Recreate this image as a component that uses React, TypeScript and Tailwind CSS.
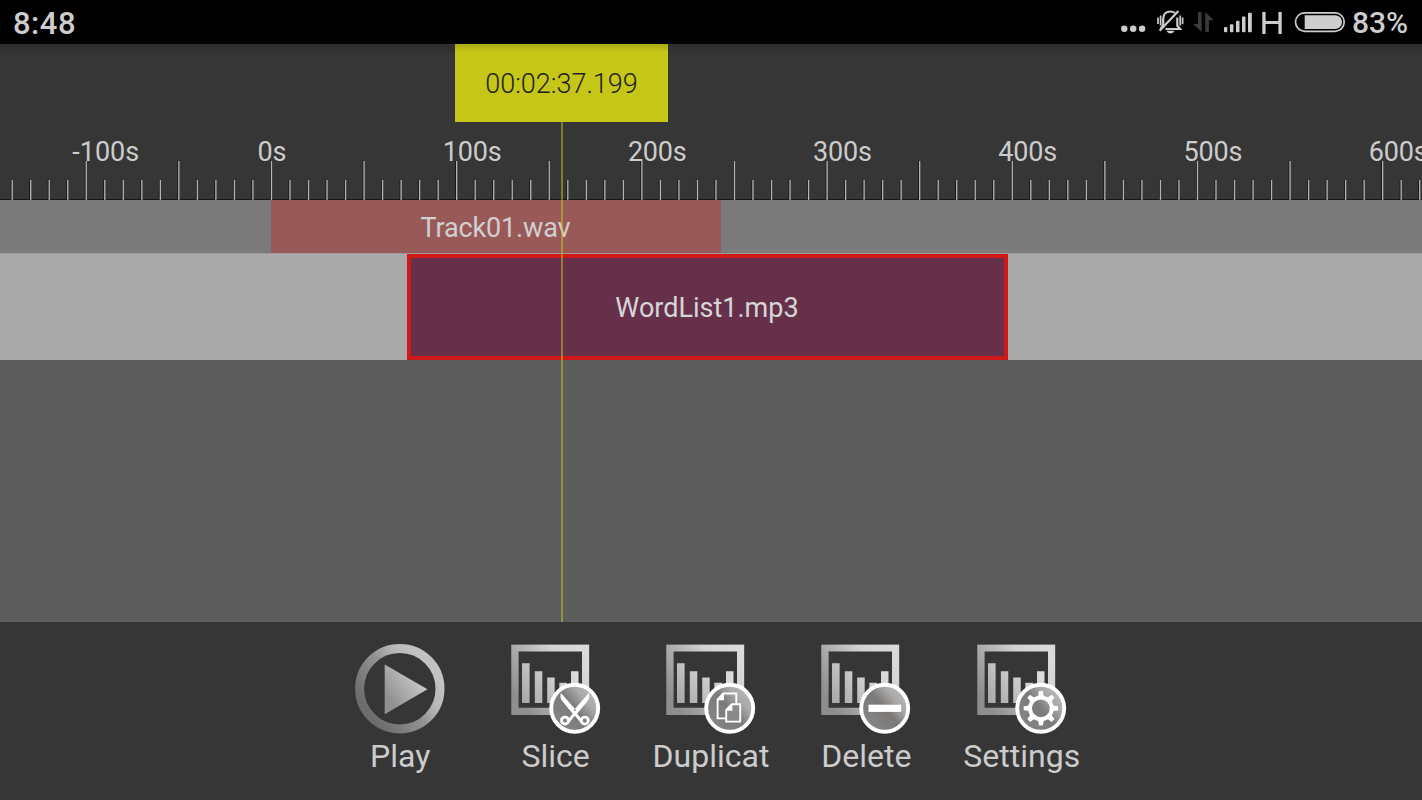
import type { ReactNode } from 'react';

const PX_PER_TICK = 18.52;
const ORIGIN_X = 271.4;

const ticks = Array.from({ length: 77 }, (_, i) => i - 14);

function StatusBar() {
  return (
    <div className="flex h-[44px] items-center justify-between bg-black pl-[13px] pr-[14px] text-[#cdcdcd]">
      <span className="pt-[2px] text-[31px] font-medium leading-none tracking-[0.5px]">8:48</span>
      <div className="flex items-center">
        <svg className="h-[44px] w-[232px]" viewBox="1120 0 232 44" fill="#cdcdcd">
          <circle cx="1124.3" cy="28.8" r="3.2" />
          <circle cx="1133.2" cy="28.8" r="3.2" />
          <circle cx="1142.1" cy="28.8" r="3.2" />
          <g fill="none" stroke="#cdcdcd" strokeWidth="2.2">
            <path d="M1163.2 26V19c0-5 3.3-7.5 7.2-7.5 1.6 0 3.2.5 4.5 1.5M1177.3 17.5v8.3l2.7 3.2h-14.5" />
            <path d="M1163.3 25l-2.8 3.8" />
            <path d="M1159.6 30.8L1178.4 11" />
            <path d="M1158 17.5v6.5M1160.6 15.5v10M1180.2 15.5v10M1182.6 17.5v6.5" strokeWidth="1.7" />
          </g>
          <path d="M1166.5 30.8h8c-1 1.8-2.2 2.8-4 2.8s-3-1-4-2.8z" />
          <path d="M1198 12h3.6v20l-8.5-8h4.9zM1205.3 32V12l8.5 8.3h-4.9V32z" fill="#3b3b3b" />
          <rect x="1224" y="27" width="3.3" height="5.3" rx="1" />
          <rect x="1229.9" y="24.2" width="3.5" height="8.1" rx="1" />
          <rect x="1236" y="20.7" width="3.5" height="11.6" rx="1" />
          <rect x="1242" y="16.5" width="3.5" height="15.8" rx="1" />
          <rect x="1248" y="12.7" width="3.8" height="19.6" rx="1" />
          <path d="M1262.3 12h3.3v9h12.8v-9h3.3v22h-3.3V24h-12.8v10h-3.3z" />
          <rect x="1295.5" y="12.8" width="48.7" height="18.5" rx="9.2" fill="none" stroke="#cdcdcd" strokeWidth="1.7" />
          <path d="M1304.7 15.2h30.5a6.8 6.8 0 0 1 0 13.7h-30.5z" />
        </svg>
        <span className="w-[56px] whitespace-nowrap pt-[2px] text-[30px] font-medium leading-none">83%</span>
      </div>
    </div>
  );
}

function Ruler() {
  return (
    <svg className="block h-[78px] w-full" viewBox="0 122 1422 78">
      <rect x="0" y="199" width="1422" height="1" fill="#151818" />
      {ticks.map((t) => {
        const x = ORIGIN_X + t * PX_PER_TICK;
        const top = t % 5 === 0 ? 161 : 180;
        return (
          <g key={t}>
            <rect x={x - 1.4} y={top} width="1.1" height={200 - top} fill="#111" />
            <rect x={x - 0.6} y={top} width="1.3" height={200 - top} fill="#b4b4b4" />
          </g>
        );
      })}
      {ticks
        .filter((t) => t % 10 === 0)
        .map((t) => (
          <text
            key={t}
            x={ORIGIN_X + t * PX_PER_TICK - 13.9}
            y="160.7"
            fill="#cccccc"
            fontSize="27"
            letterSpacing={t < 0 ? 0 : -0.2}
          >
            {t * 10}s
          </text>
        ))}
    </svg>
  );
}

function Playhead() {
  return (
    <div className="absolute left-[455px] top-0 flex w-[213px] flex-col items-center">
      <div className="flex h-[78px] w-full items-center justify-center bg-[#c6c618] bg-linear-to-b from-black/15 to-transparent to-10% text-[27px] font-light text-[#222]">
        <span className="pt-[3px]">00:02:37.199</span>
      </div>
      <div className="h-[500px] w-[2px] bg-[#c8c820]/50" />
    </div>
  );
}

function Timeline() {
  return (
    <div className="relative h-[578px] bg-[#5d5d5d]">
      <div className="h-[156px] bg-[#363636]">
        <div className="h-[78px] bg-linear-to-b from-[#2c2c2c] to-[#363636] to-15%" />
        <Ruler />
      </div>
      <div className="h-[53px] bg-[#7b7b7b] pl-[271px]">
        <div className="flex h-full w-[450px] items-center justify-center bg-[#9a5959] text-[27px] tracking-[-0.15px] text-[#d0d0d0]">
          <span className="pr-[1px] pt-[3px]">Track01.wav</span>
        </div>
      </div>
      <div className="h-[107px] border-t border-[#9a9a9a] bg-[#aaaaaa] pl-[407px]">
        <div className="flex h-full w-[601px] items-center justify-center border-4 border-[#d01818] bg-[#66304b] text-[27px] text-[#d6d6d6]">
          <span className="pr-[1px] pt-[3px]">WordList1.mp3</span>
        </div>
      </div>
      <Playhead />
    </div>
  );
}

function PlayIcon() {
  return (
    <svg className="size-[90px]" viewBox="0 0 90 90">
      <defs>
        <linearGradient id="ring" x1="0.1" y1="0.75" x2="0.85" y2="0.2">
          <stop offset="0" stopColor="#6f6d6b" />
          <stop offset="0.5" stopColor="#949392" />
          <stop offset="0.75" stopColor="#b8b8b8" />
          <stop offset="1" stopColor="#c2c2c2" />
        </linearGradient>
        <linearGradient id="arrow" x1="0.1" y1="0.7" x2="0.7" y2="0.2">
          <stop offset="0" stopColor="#929190" />
          <stop offset="1" stopColor="#c6c6c6" />
        </linearGradient>
      </defs>
      <circle cx="44.8" cy="44.7" r="40.2" fill="none" stroke="url(#ring)" strokeWidth="9" />
      <path d="M29.7 20.5V70.3L72.5 45.3z" fill="url(#arrow)" />
    </svg>
  );
}

function ClipIcon({ id, children }: { id: string; children: ReactNode }) {
  return (
    <svg className="size-[90px]" viewBox="0 0 90 90">
      <defs>
        <linearGradient id={`${id}-frame`} x1="0" y1="0.65" x2="0.9" y2="0.1">
          <stop offset="0" stopColor="#8e8e8d" />
          <stop offset="0.4" stopColor="#b2b2b1" />
          <stop offset="0.7" stopColor="#d2d2d2" />
          <stop offset="1" stopColor="#dadada" />
        </linearGradient>
        <linearGradient id={`${id}-bars`} gradientUnits="userSpaceOnUse" x1="10" y1="60" x2="60" y2="20">
          <stop offset="0" stopColor="#a5a5a5" />
          <stop offset="0.6" stopColor="#cbcbcb" />
          <stop offset="1" stopColor="#dedede" />
        </linearGradient>
        <linearGradient id={`${id}-badge`} x1="0.15" y1="0.8" x2="0.85" y2="0.2">
          <stop offset="0" stopColor="#858483" />
          <stop offset="0.5" stopColor="#7c7a79" />
          <stop offset="0.8" stopColor="#aaa9a8" />
          <stop offset="1" stopColor="#b4b4b4" />
        </linearGradient>
      </defs>
      <path d="M-.4-.4h78.5V71H-.4z" fill="#151515" />
      <path d="M.2.4h78v70.7h-78z" fill={`url(#${id}-frame)`} />
      <path d="M7.6 7.5h63.4v56.3H7.6z" fill="#363636" />
      <path
        d="M11 19.2h7.6V59H11zM23.8 27.2h7.5V59h-7.5zM36.2 33.5h7.5V59h-7.5zM48.3 38.8h7.7V59h-7.7zM60 27.2h7.5V59H60z"
        fill={`url(#${id}-bars)`}
      />
      <circle cx="63.7" cy="64.2" r="23.5" fill={`url(#${id}-badge)`} stroke="#fff" strokeWidth="3.9" />
      {children}
    </svg>
  );
}

function SliceIcon() {
  return (
    <ClipIcon id="slice">
      <path
        d="M50 49c-1.2 2.5-.6 5.2.8 7.4L61.5 69.5l5.4-1.2zM77.8 49c1.2 2.5.6 5.2-.8 7.4L66.3 69.5l-5.4-1.2z"
        fill="#fff"
      />
      <g fill="none" stroke="#fff" strokeWidth="2.9">
        <path d="M66.5 66.5L60.5 73.5L57.5 77.5M61.3 66.5L67.3 73.5L70.3 77.5" />
        <circle cx="54" cy="76.6" r="3.5" />
        <circle cx="73.8" cy="76.6" r="3.5" />
      </g>
    </ClipIcon>
  );
}

function DuplicateIcon() {
  return (
    <ClipIcon id="duplicate">
      <path d="M70.3 59.5V49.5H57.2L51.6 55.5V74.4H60" fill="none" stroke="#fff" strokeWidth="1.9" />
      <path d="M51.2 56.2h6.8v-7z" fill="#fff" />
      <path d="M65.8 60.2H74.2V77.6H60.2V66z" fill="#8c8a89" stroke="#fff" strokeWidth="1.9" />
      <path d="M59.8 66.8h6.6v-6.8z" fill="#fff" />
    </ClipIcon>
  );
}

function DeleteIcon() {
  return (
    <ClipIcon id="delete">
      <rect x="47.5" y="60.7" width="32.7" height="7.2" fill="#fff" />
    </ClipIcon>
  );
}

function SettingsIcon() {
  return (
    <ClipIcon id="settings">
      <circle cx="63.9" cy="64.3" r="10.9" fill="none" stroke="#fff" strokeWidth="4" />
      {[0, 45, 90, 135, 180, 225, 270, 315].map((angle) => (
        <path key={angle} d="M61 53l.9-5.9h4L66.8 53z" fill="#fff" transform={`rotate(${angle} 63.9 64.3)`} />
      ))}
    </ClipIcon>
  );
}

const actions = [
  { label: 'Play', icon: PlayIcon },
  { label: 'Slice', icon: SliceIcon },
  { label: 'Duplicat', icon: DuplicateIcon },
  { label: 'Delete', icon: DeleteIcon },
  { label: 'Settings', icon: SettingsIcon },
];

function Toolbar() {
  return (
    <div className="flex h-[178px] justify-center bg-[#363636] pt-[22px]">
      {actions.map(({ label, icon: Icon }) => (
        <button key={label} className="flex w-[155.4px] flex-col items-center">
          <Icon />
          <span className="mt-[2px] text-[32px] leading-[40px] text-[#cccccc]">{label}</span>
        </button>
      ))}
    </div>
  );
}

export default function App() {
  return (
    <div className="h-[800px] w-[1422px] overflow-hidden bg-[#363636] font-[Roboto,sans-serif]">
      <StatusBar />
      <Timeline />
      <Toolbar />
    </div>
  );
}
